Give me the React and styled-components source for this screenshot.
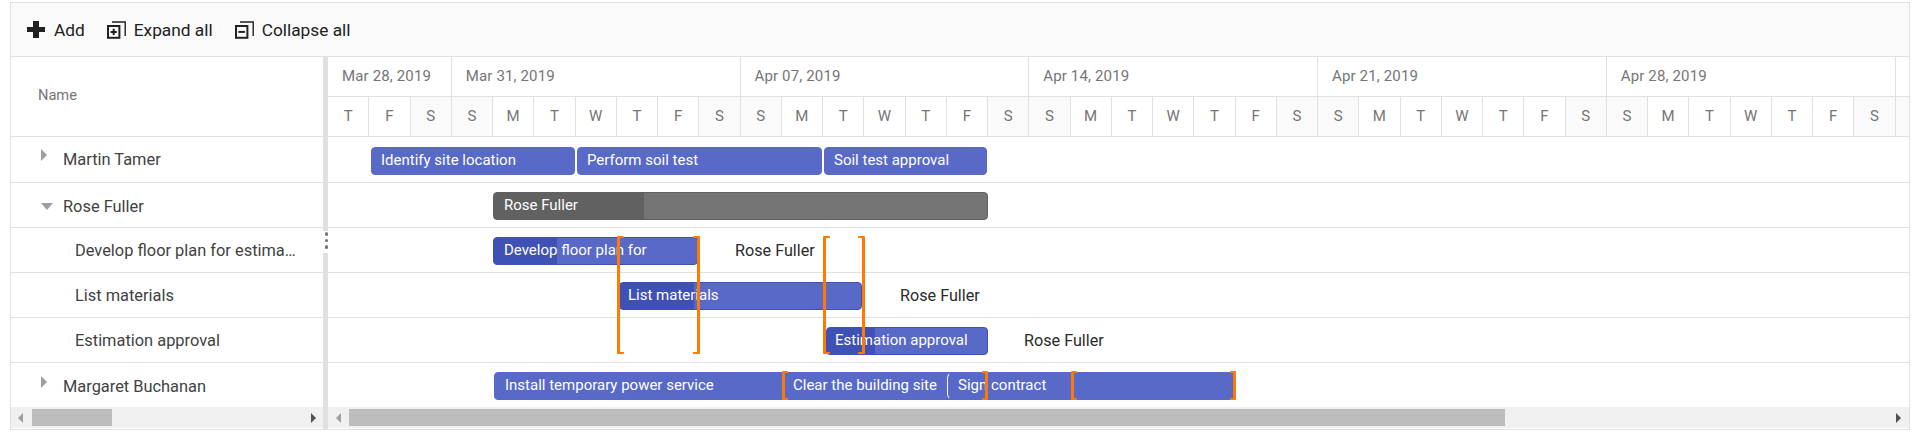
import React from 'react';
import styled, { createGlobalStyle } from 'styled-components';

const DAY = 41.25;
const font = `Roboto, "Liberation Sans", sans-serif`;

const Global = createGlobalStyle`
  html, body { margin: 0; padding: 0; background: #fff; }
  body { font-family: ${font}; }
`;

const Page = styled.div`
  width: 1920px;
  height: 442px;
  padding: 2px 10px 0;
  box-sizing: border-box;
  overflow: hidden;
`;
const Gantt = styled.div`
  width: 1900px;
  height: 428px;
  box-sizing: border-box;
  border: 1px solid #e0e0e0;
  display: flex;
  flex-direction: column;
`;
const Toolbar = styled.div`
  height: 54px;
  flex: none;
  box-sizing: border-box;
  background: #fafafa;
  border-bottom: 1px solid #e0e0e0;
  display: flex;
  align-items: center;
  padding-left: 16px;
  gap: 22px;
`;
const ToolButton = styled.div`
  display: flex;
  align-items: center;
  gap: 8px;
  font-size: 17.3px;
  color: #212121;
`;
const Body = styled.div`
  flex: 1;
  display: flex;
  min-height: 0;
`;
const Left = styled.div`
  width: 312px;
  flex: none;
  display: flex;
  flex-direction: column;
`;
const Splitter = styled.div`
  width: 5px;
  flex: none;
  background: #e0e0e0;
  position: relative;
`;
const Dots = styled.div`
  position: absolute;
  left: 0;
  top: 174px;
  width: 7px;
  height: 22px;
  box-sizing: border-box;
  padding-bottom: 3px;
  background: #fff;
  display: flex;
  flex-direction: column;
  align-items: center;
  justify-content: center;
  gap: 3px;
  z-index: 2;
  & > i {
    width: 3.6px;
    height: 3.6px;
    border-radius: 50%;
    background: #757575;
  }
`;
const Right = styled.div`
  flex: 1;
  min-width: 0;
  display: flex;
  flex-direction: column;
  position: relative;
`;
const NameHeader = styled.div`
  height: 80px;
  flex: none;
  box-sizing: border-box;
  border-bottom: 1px solid #e0e0e0;
  display: flex;
  align-items: center;
  padding: 0 0 3px 27px;
  font-size: 14.6px;
  color: #757575;
`;
const TreeRow = styled.div`
  height: ${p => p.$h}px;
  flex: none;
  box-sizing: border-box;
  border-bottom: ${p => (p.$last ? 'none' : '1px solid #e0e0e0')};
  display: flex;
  align-items: center;
  position: relative;
  padding-left: ${p => (p.$child ? 64 : 52)}px;
  padding-top: ${p => p.$nudge || 0}px;
  font-size: 16.4px;
  color: #424242;
`;
const RowName = styled.span`
  white-space: nowrap;
`;
const Expander = styled.span`
  position: absolute;
  left: 30px;
  top: ${p => p.$top}px;
  width: 0;
  height: 0;
  border-style: solid;
  ${p =>
    p.$open
      ? `border-width: 7px 6.5px 0 6.5px; border-color: #9e9e9e transparent transparent transparent;`
      : `border-width: 6px 0 6px 6px; border-color: transparent transparent transparent #9e9e9e;`}
`;
const Tier = styled.div`
  display: flex;
  height: ${p => p.$h}px;
  flex: none;
  box-sizing: border-box;
  border-bottom: 1px solid #e0e0e0;
  overflow: hidden;
`;
const WeekCell = styled.div`
  flex: none;
  box-sizing: border-box;
  border-right: 1px solid #e0e0e0;
  display: flex;
  align-items: center;
  padding: 0 0 1px 14px;
  font-size: 15px;
  letter-spacing: 0.15px;
  color: #757575;
  height: 100%;
  white-space: nowrap;
`;
const DayCell = styled.div`
  flex: none;
  width: ${DAY}px;
  box-sizing: border-box;
  border-right: 1px solid #e0e0e0;
  display: flex;
  align-items: center;
  justify-content: center;
  padding-bottom: 1px;
  font-size: 15px;
  color: #757575;
  background: ${p => (p.$weekend ? '#fafafa' : '#fff')};
`;
const ChartRow = styled.div`
  height: ${p => p.$h}px;
  flex: none;
  box-sizing: border-box;
  border-bottom: ${p => (p.$last ? 'none' : '1px solid #e0e0e0')};
  position: relative;
`;
const Bar = styled.div`
  position: absolute;
  top: ${p => p.$top}px;
  height: 28px;
  box-sizing: border-box;
  background: ${p => (p.$parent ? '#757575' : '#5869c7')};
  border: 1px solid ${p => (p.$parent ? '#616161' : p.$outlined ? '#3f51b5' : '#5869c7')};
  border-radius: 4px;
  color: #fff;
  font-size: 15px;
  line-height: 25px;
  overflow: hidden;
  white-space: nowrap;
`;
const SignBar = styled(Bar)`
  border-left-color: #fff;
  border-radius: 6px 0 0 6px;
`;
const Progress = styled.div`
  position: absolute;
  left: 0;
  top: 0;
  bottom: 0;
  background: ${p => (p.$parent ? '#616161' : '#3f51b5')};
`;
const BarLabel = styled.span`
  position: relative;
  margin-left: ${p => p.$pad}px;
`;
const SideLabel = styled.span`
  position: absolute;
  top: 13px;
  font-size: 16.2px;
  line-height: 20px;
  color: #2b2b2b;
  white-space: nowrap;
`;
const Bracket = styled.div`
  position: absolute;
  left: ${p => p.$x}px;
  top: ${p => p.$y}px;
  width: ${p => p.$w}px;
  height: ${p => p.$h}px;
  box-sizing: border-box;
  border: 0 solid #ff7a00;
  border-top-width: 2px;
  border-bottom-width: 2px;
  ${p => (p.$side === 'l' ? 'border-left-width: 3px;' : 'border-right-width: 3px;')}
  border-radius: 1px;
  z-index: 3;
`;
const ScrollTrack = styled.div`
  height: 21px;
  flex: none;
  background: #f0f0f0;
  position: relative;
`;
const Thumb = styled.div`
  position: absolute;
  top: 2px;
  height: 17px;
  left: ${p => p.$left}px;
  width: ${p => p.$w}px;
  background: #bdbdbd;
`;
const Arrow = styled.span`
  position: absolute;
  top: 6px;
  left: ${p => p.$x}px;
  width: 0;
  height: 0;
  border-style: solid;
  ${p =>
    p.$dir === 'l'
      ? `border-width: 5px 5px 5px 0; border-color: transparent #9e9e9e transparent transparent;`
      : `border-width: 5px 0 5px 5px; border-color: transparent transparent transparent #505050;`}
`;

const IconPlus = () => (
  <svg width="19" height="17" viewBox="0 0 19 17">
    <path d="M6 0h6v6h6v5h-6v6H6v-6H0V6h6z" fill="#212121" />
  </svg>
);
const IconStack = ({ plus }) => (
  <svg width="19" height="18" viewBox="0 0 19 18" fill="none" stroke="#212121">
    <path d="M5 1H18.2V15" strokeWidth="1.4" />
    <rect x="1" y="5" width="11.4" height="11.8" strokeWidth="2" />
    <path d={plus ? 'M3.6 10.9h6.2M6.7 7.8v6.2' : 'M3.4 10.9h6.6'} strokeWidth="2" />
  </svg>
);

const letters = ['S', 'M', 'T', 'W', 'T', 'F', 'S'];
const days = ['T', 'F', 'S'];
for (let w = 0; w < 5; w++) days.push(...letters);
days.push('');

const weeks = [
  { label: 'Mar 28, 2019', n: 3 },
  { label: 'Mar 31, 2019', n: 7 },
  { label: 'Apr 07, 2019', n: 7 },
  { label: 'Apr 14, 2019', n: 7 },
  { label: 'Apr 21, 2019', n: 7 },
  { label: 'Apr 28, 2019', n: 7 },
  { label: '', n: 1 },
];

const treeRows = [
  { name: 'Martin Tamer', h: 46, exp: 'closed', expTop: 12 },
  { name: 'Rose Fuller', h: 45, exp: 'open', expTop: 20, nudge: 2 },
  { name: 'Develop floor plan for estima…', h: 45, child: true },
  { name: 'List materials', h: 45, child: true },
  { name: 'Estimation approval', h: 45, child: true },
  { name: 'Margaret Buchanan', h: 44, exp: 'closed', expTop: 13, last: true, nudge: 3 },
];

/* x values are page coordinates; the chart starts at x = 328 */
const X0 = 328;
const chart = [
  {
    h: 46,
    top: 10,
    bars: [
      { x: 371, w: 204, label: 'Identify site location', pad: 9 },
      { x: 577, w: 245, label: 'Perform soil test', pad: 9 },
      { x: 824, w: 163, label: 'Soil test approval', pad: 9 },
    ],
  },
  {
    h: 45,
    top: 9,
    bars: [{ x: 493, w: 495, label: 'Rose Fuller', pad: 10, parent: true, prog: 150 }],
  },
  {
    h: 45,
    top: 9,
    bars: [{ x: 493, w: 205, label: 'Develop floor plan for', pad: 10, outlined: true, prog: 63 }],
    side: { x: 735, label: 'Rose Fuller' },
  },
  {
    h: 45,
    top: 9,
    bars: [{ x: 619, w: 243, label: 'List materials', pad: 8, outlined: true, prog: 74 }],
    side: { x: 900, label: 'Rose Fuller' },
  },
  {
    h: 45,
    top: 9,
    bars: [{ x: 826, w: 162, label: 'Estimation approval', pad: 8, outlined: true, prog: 48 }],
    side: { x: 1024, label: 'Rose Fuller' },
  },
  {
    h: 44,
    top: 9,
    last: true,
    bars: [
      { x: 494, w: 742, label: 'Install temporary power service', pad: 10 },
      { x: 784, w: 164, label: 'Clear the building site', pad: 8 },
    ],
    sign: true,
  },
];

const brackets = [
  { x: 617, y: 236, h: 118, w: 7, side: 'l' },
  { x: 693, y: 236, h: 118, w: 7, side: 'r' },
  { x: 823, y: 236, h: 118, w: 7, side: 'l' },
  { x: 858, y: 236, h: 118, w: 7, side: 'r' },
  { x: 782, y: 371, h: 29, w: 6, side: 'l' },
  { x: 982, y: 371, h: 29, w: 6, side: 'r' },
  { x: 1071, y: 371, h: 29, w: 6, side: 'l' },
  { x: 1230, y: 371, h: 29, w: 6, side: 'r' },
];
const Y0 = 57;

export default function App() {
  return (
    <Page>
      <Global />
      <Gantt>
        <Toolbar>
          <ToolButton><IconPlus />Add</ToolButton>
          <ToolButton><IconStack plus />Expand all</ToolButton>
          <ToolButton><IconStack />Collapse all</ToolButton>
        </Toolbar>
        <Body>
          <Left>
            <NameHeader>Name</NameHeader>
            {treeRows.map(r => (
              <TreeRow key={r.name} $h={r.h} $child={r.child} $last={r.last} $nudge={r.nudge}>
                {r.exp && <Expander $open={r.exp === 'open'} $top={r.expTop} />}
                <RowName>{r.name}</RowName>
              </TreeRow>
            ))}
            <ScrollTrack>
              <Arrow $dir="l" $x={7} />
              <Thumb $left={21} $w={80} />
              <Arrow $dir="r" $x={300} />
            </ScrollTrack>
          </Left>
          <Splitter>
            <Dots><i /><i /><i /></Dots>
          </Splitter>
          <Right>
            <Tier $h={40}>
              {weeks.map((w, i) => (
                <WeekCell key={i} style={{ width: w.n * DAY }}>{w.label}</WeekCell>
              ))}
            </Tier>
            <Tier $h={40}>
              {days.map((d, i) => (
                <DayCell key={i} $weekend={d === 'S' || d === ''}>{d}</DayCell>
              ))}
            </Tier>
            {chart.map((row, i) => (
              <ChartRow key={i} $h={row.h} $last={row.last}>
                {row.bars.map(b => (
                  <Bar
                    key={b.label}
                    $top={row.top}
                    $parent={b.parent}
                    $outlined={b.outlined}
                    style={{ left: b.x - X0, width: b.w }}
                  >
                    {b.prog && <Progress $parent={b.parent} style={{ width: b.prog }} />}
                    <BarLabel $pad={b.pad}>{b.label}</BarLabel>
                  </Bar>
                ))}
                {row.sign && (
                  <SignBar $top={row.top} style={{ left: 947 - X0, width: 124 }}>
                    <BarLabel $pad={10}>Sign contract</BarLabel>
                  </SignBar>
                )}
                {row.side && <SideLabel style={{ left: row.side.x - X0 }}>{row.side.label}</SideLabel>}
              </ChartRow>
            ))}
            <ScrollTrack>
              <Arrow $dir="l" $x={8} />
              <Thumb $left={21} $w={1156} />
              <Arrow $dir="r" $x={1568} />
            </ScrollTrack>
            {brackets.map((b, i) => (
              <Bracket key={i} $x={b.x - X0} $y={b.y - Y0} $h={b.h} $w={b.w} $side={b.side} />
            ))}
          </Right>
        </Body>
      </Gantt>
    </Page>
  );
}
